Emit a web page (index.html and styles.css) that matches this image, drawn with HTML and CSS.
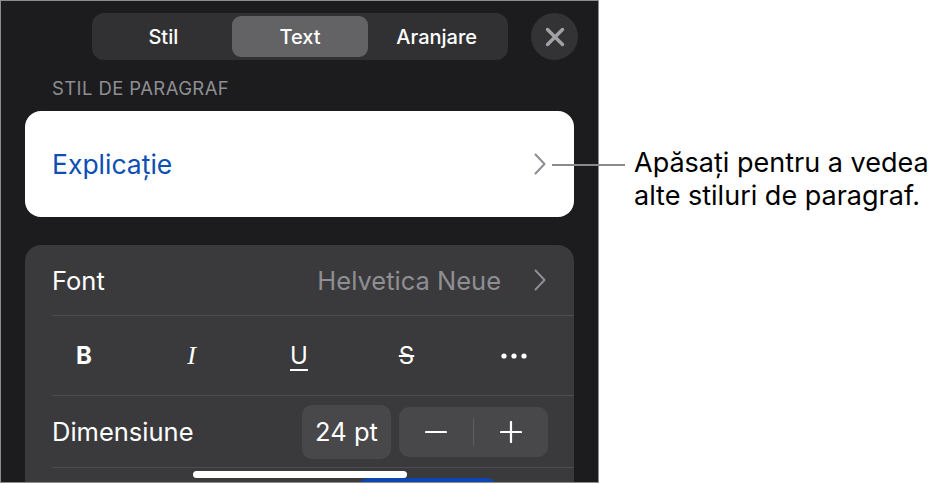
FILE: index.html
```html
<!DOCTYPE html>
<html lang="ro">
<head>
<meta charset="utf-8">
<link rel="stylesheet" href="styles.css">
</head>
<body>
<div class="stage">
  <div class="panel">
    <div class="topbar">
      <div class="segmented">
        <div class="seg">Stil</div>
        <div class="seg seg-active">Text</div>
        <div class="seg">Aranjare</div>
      </div>
      <div class="close">
        <svg width="20" height="20" viewBox="0 0 20 20"><path d="M2.5 2.5 L17.5 17.5 M17.5 2.5 L2.5 17.5" stroke="#a1a1a6" stroke-width="3.4" stroke-linecap="round"/></svg>
      </div>
    </div>
    <div class="section-label">STIL DE PARAGRAF</div>
    <div class="card card-light">
      <div class="style-name">Explicație</div>
      <svg class="chev" width="12" height="22" viewBox="0 0 12 22"><path d="M1.5 1.5 L10.5 11 L1.5 20.5" fill="none" stroke="#8e8e93" stroke-width="2" stroke-linecap="round" stroke-linejoin="round"/></svg>
    </div>
    <div class="card card-dark">
      <div class="row row-font">
        <div class="row-label">Font</div>
        <div class="row-value">Helvetica Neue</div>
        <svg class="chev" width="12" height="22" viewBox="0 0 12 22"><path d="M1.5 1.5 L10.5 11 L1.5 20.5" fill="none" stroke="#8e8e93" stroke-width="2" stroke-linecap="round" stroke-linejoin="round"/></svg>
      </div>
      <div class="row row-format">
        <span class="fmt fmt-b">B</span>
        <span class="fmt fmt-i">I</span>
        <span class="fmt fmt-u">U</span>
        <span class="fmt fmt-s">S</span>
        <span class="fmt fmt-more">
          <svg width="26" height="6" viewBox="0 0 26 6"><circle cx="3" cy="3" r="2.6" fill="#fff"/><circle cx="13" cy="3" r="2.6" fill="#fff"/><circle cx="23" cy="3" r="2.6" fill="#fff"/></svg>
        </span>
      </div>
      <div class="row row-size">
        <div class="row-label">Dimensiune</div>
        <div class="size-box">24 pt</div>
        <div class="stepper">
          <div class="step">
            <svg width="22" height="22" viewBox="0 0 22 22"><path d="M1 11 H21" stroke="#fff" stroke-width="2.2" stroke-linecap="round"/></svg>
          </div>
          <div class="step-div"></div>
          <div class="step">
            <svg width="22" height="22" viewBox="0 0 22 22"><path d="M1 11 H21 M11 1 V21" stroke="#fff" stroke-width="2.2" stroke-linecap="round"/></svg>
          </div>
        </div>
      </div>
      <div class="row row-next">
        <div class="blue-btn"></div>
      </div>
    </div>
    <div class="home-indicator"></div>
  </div>
  <div class="callout">
    <div class="callout-line"></div>
    <div class="callout-text">Apăsați pentru a vedea<br>alte stiluri de paragraf.</div>
  </div>
</div>
</body>
</html>
```
FILE: styles.css
```css
* { box-sizing: border-box; }
html, body { margin: 0; padding: 0; background: #fff; }
body {
  width: 939px;
  height: 484px;
  overflow: hidden;
  font-family: Inter, "Noto Sans", sans-serif;
}
.stage {
  position: relative;
  width: 939px;
  height: 484px;
}
.panel {
  position: relative;
  width: 599px;
  height: 483px;
  border: 1px solid #8d8d8f;
  background: #1c1c1e;
  overflow: hidden;
}
.topbar {
  display: flex;
  align-items: center;
  margin-top: 12px;
  padding-left: 91px;
  gap: 23px;
}
.segmented {
  display: flex;
  width: 416px;
  height: 47px;
  padding: 3px;
  background: #313134;
  border-radius: 12px;
}
.seg {
  flex: 1;
  display: flex;
  align-items: center;
  justify-content: center;
  color: #fff;
  font-size: 20px;
  font-weight: 500;
  border-radius: 9px;
}
.seg-active { background: #636366; }
.close {
  width: 47px;
  height: 47px;
  border-radius: 50%;
  background: #333336;
  display: flex;
  align-items: center;
  justify-content: center;
}
.section-label {
  margin: 17px 0 0 51px;
  color: #8e8e93;
  font-size: 18.5px;
  line-height: 22px;
  letter-spacing: 0.4px;
}
.card {
  margin-left: 24px;
  width: 549px;
  border-radius: 16px;
}
.card-light {
  margin-top: 12px;
  height: 106px;
  background: #fff;
  display: flex;
  align-items: center;
  padding: 0 28px 0 27px;
}
.style-name {
  flex: 1;
  color: #0d4fb3;
  font-size: 26.5px;
}
.card-dark {
  margin-top: 28px;
  height: 300px;
  background: #3a3a3c;
  padding-left: 27px;
}
.row {
  display: flex;
  align-items: center;
  border-bottom: 1px solid #4c4c4f;
}
.row-label {
  flex: 1;
  color: #fff;
  font-size: 25.5px;
}
.row-font {
  height: 71px;
  padding-right: 28px;
}
.row-value {
  color: #8e8e93;
  font-size: 25.5px;
  margin-right: 33px;
}
.row-format {
  height: 80px;
  justify-content: space-between;
  padding: 0 40px 0 12px;
}
.fmt {
  width: 40px;
  display: flex;
  align-items: center;
  justify-content: center;
  color: #fff;
  font-size: 24px;
  line-height: 26px;
}
.fmt-b { font-weight: 700; }
.fmt-i { font-family: "Liberation Serif", serif; font-style: italic; font-size: 26px; }
.fmt-u { text-decoration: underline; text-underline-offset: 5px; text-decoration-thickness: 1.5px; }
.fmt-s { text-decoration: line-through; text-decoration-thickness: 1.5px; }
.row-size {
  height: 72px;
  padding-right: 26px;
  gap: 8px;
}
.size-box {
  width: 89px;
  height: 54px;
  border-radius: 10px;
  background: #48484a;
  color: #fff;
  font-size: 25.5px;
  display: flex;
  align-items: center;
  justify-content: center;
}
.stepper {
  width: 149px;
  height: 50px;
  border-radius: 10px;
  background: #48484a;
  display: flex;
  align-items: center;
}
.step {
  flex: 1;
  display: flex;
  align-items: center;
  justify-content: center;
}
.step-div {
  width: 1px;
  height: 28px;
  background: #5e5e62;
}
.row-next {
  border-bottom: none;
  padding: 10px 0 0 305px;
  align-items: flex-start;
}
.blue-btn {
  width: 141px;
  height: 40px;
  background: #0c46b0;
  border-radius: 12px;
}
.home-indicator {
  position: absolute;
  left: 192px;
  top: 470px;
  width: 214px;
  height: 7px;
  border-radius: 4px;
  background: #fff;
}
.callout {
  position: absolute;
  left: 552px;
  top: 145px;
  display: flex;
  align-items: flex-start;
}
.callout-line {
  width: 73px;
  height: 2px;
  background: #8a8a8a;
  margin-top: 19px;
}
.callout-text {
  margin-left: 9px;
  margin-top: 1px;
  color: #000;
  font-size: 27px;
  line-height: 33px;
  white-space: nowrap;
}
```
